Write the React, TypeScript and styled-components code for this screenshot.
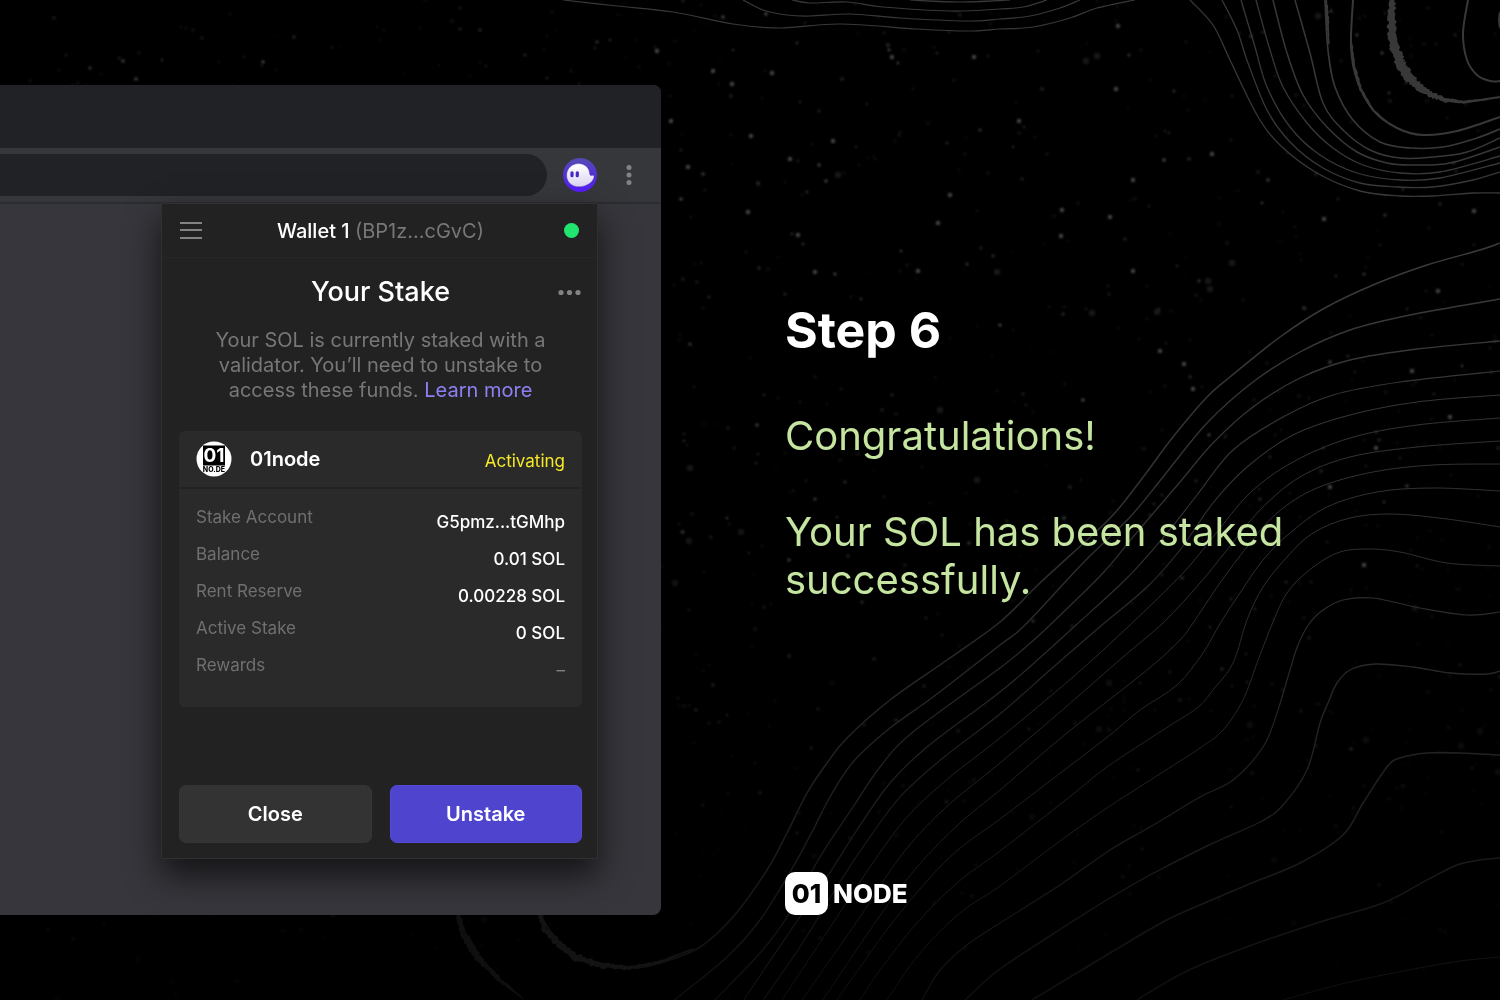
import React from "react";
import styled, { createGlobalStyle } from "styled-components";

const Global = createGlobalStyle`
  *, *::before, *::after { box-sizing: border-box; }
  body {
    margin: 0;
    background: #000;
    color: #fff;
    font-family: Inter, "Liberation Sans", sans-serif;
  }
  h1, h2, p, dl, dt, dd { margin: 0; font-weight: 400; }
  button, input { font: inherit; color: inherit; }
`;

/* ---------- backdrop: star dust and contour lines ---------- */

type Point = [number, number];

const parse = (s: string): Point[] =>
  s.split(" ").map((p) => p.split(",").map(Number) as Point);

const smooth = (pts: Point[]): string => {
  let d = `M${pts[0][0]} ${pts[0][1]}`;
  for (let i = 0; i < pts.length - 1; i++) {
    const a = pts[i - 1] || pts[i];
    const b = pts[i];
    const c = pts[i + 1];
    const e = pts[i + 2] || c;
    const x1 = b[0] + (c[0] - a[0]) / 6;
    const y1 = b[1] + (c[1] - a[1]) / 6;
    const x2 = c[0] - (e[0] - b[0]) / 6;
    const y2 = c[1] - (e[1] - b[1]) / 6;
    d += `C${x1.toFixed(1)} ${y1.toFixed(1)} ${x2.toFixed(1)} ${y2.toFixed(1)} ${c[0]} ${c[1]}`;
  }
  return d;
};

const topLines: [string, number][] = [
  ["1190,0 1213,25 1230,60 1257,115 1280,145 1317,173 1360,191 1400,196 1433,196 1473,193 1500,193", 1.3],
  ["1222,0 1237,30 1248,63 1267,110 1290,142 1323,168 1360,183 1397,187 1433,187 1473,180 1500,172", 1.3],
  ["1241,0 1255,47 1267,87 1290,127 1320,155 1357,173 1400,180 1440,178 1500,163", 1.3],
  ["1256,0 1270,50 1283,87 1307,123 1333,148 1363,165 1400,173 1440,172 1500,156", 1.3],
  ["1273,0 1287,53 1303,95 1327,127 1357,152 1387,163 1413,165 1450,163 1500,147", 1.5],
  ["1295,0 1310,53 1323,103 1343,130 1370,150 1400,158 1433,157 1467,152 1500,138", 1.5],
  ["1325,0 1328,50 1335,87 1353,120 1380,142 1410,148 1443,147 1477,138 1500,129", 1.7],
  ["1353,0 1351,47 1357,80 1373,110 1397,128 1423,135 1457,131 1500,117", 2],
  ["1391,0 1391,33 1398,62 1417,85 1440,98 1463,102 1500,97", 2],
  ["1468,0 1463,33 1467,60 1477,75 1490,81 1500,81", 2],
  ["1500,12 1499,20 1500,28", 2],
  ["563,0 617,6 673,12 733,24 780,28 840,24 917,29 967,31 1000,29 1033,27 1070,18 1097,8 1135,0", 1.2],
  ["743,0 763,10 787,15 810,16 850,14 900,18 967,21 1000,19 1030,16 1060,8 1080,0", 1.2],
  ["792,0 810,3 847,2 883,7 950,11 1000,9 1023,7 1047,0", 1.2],
  ["910,0 960,2 1010,0", 1.2],
];

const lowerLines: [string, number][] = [
  ["1500,243 1480,250 1427,265 1373,285 1323,309 1280,337 1230,377 1207,397 1173,437 1147,472 1120,507 1100,528 1040,583 1000,622 947,660 890,700 847,738 827,763 807,793 787,833 767,870 733,917 700,947 660,963 630,968 590,962 560,943 540,915", 1.5],
  ["1500,299 1410,315 1350,330 1300,352 1253,382 1207,423 1163,477 1130,517 1083,563 1025,625 1000,645 933,697 890,728 853,762 830,797 813,830 793,867 760,920 727,957 677,998 670,1004", 1.4],
  ["1500,341 1417,349 1350,360 1300,378 1253,407 1213,443 1180,482 1133,537 1103,573 1050,625 1028,645 1000,668 913,732 880,767 853,807 820,857 787,917 760,953 717,998 710,1006", 1.3],
  ["1500,371 1400,382 1333,395 1283,417 1233,450 1197,495 1167,533 1127,578 1076,625 1043,655 1000,692 927,747 890,783 857,830 827,877 793,927 745,998 740,1006", 1.2],
  ["1500,395 1417,402 1350,415 1293,435 1247,467 1213,503 1180,550 1147,587 1102,625 1050,670 1000,714 943,758 900,797 863,847 833,893 800,947 763,1000", 1.1],
  ["1500,418 1417,425 1350,438 1293,462 1250,493 1213,537 1183,573 1130,625 1073,677 1000,738 950,777 907,817 870,867 833,923 782,1000", 1],
  ["1500,441 1417,447 1350,457 1300,477 1260,510 1227,550 1200,583 1164,622 1123,657 1067,706 1000,763 943,810 900,857 860,917 802,1000", 1],
  ["1500,464 1433,465 1373,472 1317,488 1277,513 1247,547 1220,583 1193,623 1180,640 1147,670 1067,733 1000,790 960,823 917,867 877,920 823,1000", 1],
  ["1500,491 1433,488 1377,492 1327,507 1290,533 1263,560 1240,593 1221,622 1203,653 1177,685 1140,710 1110,735 1050,781 1000,819 950,857 900,913 858,970 837,1000", 1],
  ["1500,527 1447,519 1393,514 1350,518 1313,533 1287,557 1263,587 1247,620 1233,663 1213,690 1197,708 1163,730 1107,767 1067,799 1000,851 957,883 917,923 880,970 860,1000", 1],
  ["1500,566 1447,563 1400,552 1367,549 1337,553 1307,572 1287,593 1273,622 1257,663 1243,700 1223,730 1200,748 1163,772 1110,806 1060,841 1000,886 960,913 920,953 887,1000", 1],
  ["1500,612 1467,615 1420,608 1373,598 1343,600 1323,610 1309,624 1298,645 1290,670 1277,713 1263,747 1233,780 1200,797 1150,827 1110,850 1060,885 1000,923 967,945 940,970 922,1000", 1.2],
  ["1500,671 1487,674 1450,673 1413,667 1375,664 1350,670 1337,683 1328,703 1320,723 1307,770 1283,805 1260,822 1207,846 1150,875 1110,898 1067,925 1000,969 965,1000", 1.4],
  ["1500,755 1460,753 1427,753 1400,758 1387,767 1363,803 1343,835 1300,863 1247,885 1200,905 1163,922 1110,953 1032,1000", 1.6],
  ["1500,858 1480,860 1457,865 1427,880 1383,903 1317,923 1233,952 1183,973 1137,1000", 1.4],
  ["1500,957 1447,963 1350,982 1283,1000", 1],
];

/* Frayed bands: centre line, widest half-width, fill */
const frayed: [string, number, string][] = [
  ["1392,0 1392,18 1392,33 1395,50 1400,64 1408,76 1418,86 1432,95 1446,100 1463,102 1490,99", 6, "#383838"],
  ["1326,0 1327,12 1328,28 1329,46", 1, "#383838"],
  ["1351,40 1354,66 1361,90 1373,110 1388,123", 1, "#383838"],
  ["540,915 545,930 560,945 575,957 600,965 628,968 660,962 695,948", 4, "#131313"],
  ["458,915 464,935 478,958 500,980 525,1000", 4, "#0f0f0f"],
];

const seeded = (seed: number) => () => {
  seed = (seed * 16807) % 2147483647;
  return seed / 2147483647;
};

const fray = (pts: Point[], width: number, seed: number): string => {
  const rnd = seeded(seed);
  const left: string[] = [];
  const right: string[] = [];
  const n = pts.length - 1;
  pts.slice(0, n).forEach((p, i) => {
    const q = pts[i + 1];
    const len = Math.hypot(q[0] - p[0], q[1] - p[1]);
    const nx = -(q[1] - p[1]) / len;
    const ny = (q[0] - p[0]) / len;
    const steps = Math.ceil(len / 2);
    for (let k = 0; k < steps; k++) {
      const t = k / steps;
      const g = (i + t) / n;
      const w = 0.8 + width * (g < 0.4 ? 0.55 + g : 0.95 * Math.max(0, (1 - g) / 0.6));
      const x = p[0] + (q[0] - p[0]) * t;
      const y = p[1] + (q[1] - p[1]) * t;
      const l = w * (0.5 + rnd() * 0.6);
      const r = w * (0.5 + rnd() * 0.6);
      left.push(`${(x + nx * l).toFixed(1)} ${(y + ny * l).toFixed(1)}`);
      right.unshift(`${(x - nx * r).toFixed(1)} ${(y - ny * r).toFixed(1)}`);
    }
  });
  return `M${left.concat(right).join("L")}Z`;
};

const rnd = seeded(4711);
const dust = Array.from({ length: 1500 }, () => {
  const x = rnd() * 1500;
  const y = rnd() * 1000;
  const big = rnd();
  const glow = rnd();
  const fade = y < 450 ? 1 : 1 - (y - 450) / 620;
  return {
    x: Math.round(x),
    y: Math.round(y),
    r: big > 0.97 ? 3.2 : 0.8 + big * 1.1,
    o: (big > 0.97 ? 0.09 : 0.06 + glow * glow * glow * 0.24) * fade,
  };
});

const brightDust = parse(
  "1133,271 1019,121 1116,89 1133,180 1212,154 1118,26 1062,210 1110,217 1061,236 1324,219 1474,211 1438,291 1376,448 1330,487 1160,351 1184,364 1193,389 671,121 713,71 732,84 751,136 772,73 688,167 833,141 790,159 748,212 657,51 798,235 950,195 938,223 892,57 974,57 918,271 815,272 1412,371 1450,417 1364,565"
);

const BackdropSvg = styled.svg`
  position: absolute;
  inset: 0;
  width: 100%;
  height: 100%;
`;

const Backdrop = () => (
  <BackdropSvg viewBox="0 0 1500 1000" preserveAspectRatio="xMidYMid slice" aria-hidden="true">
    <defs>
      <linearGradient id="lower" gradientUnits="userSpaceOnUse" x1="0" y1="240" x2="0" y2="1000">
        <stop offset="0" stopColor="#3c3c3c" />
        <stop offset="0.5" stopColor="#2b2b2b" />
        <stop offset="0.8" stopColor="#1b1b1b" />
        <stop offset="1" stopColor="#0f0f0f" />
      </linearGradient>
      <filter id="soft" x="0" y="0" width="100%" height="100%">
        <feGaussianBlur stdDeviation="0.8" />
      </filter>
    </defs>
    <g fill="#fff" filter="url(#soft)">
      {dust.map((s, i) => (
        <circle key={i} cx={s.x} cy={s.y} r={s.r} opacity={s.o} />
      ))}
      {brightDust.map(([x, y], i) => (
        <circle key={i} cx={x} cy={y} r={2.2} opacity={0.27} />
      ))}
    </g>
    <g fill="none" stroke="#383838">
      {topLines.map(([p, w], i) => (
        <path key={i} d={smooth(parse(p))} strokeWidth={w} />
      ))}
    </g>
    <g fill="none" stroke="url(#lower)">
      {lowerLines.map(([p, w], i) => (
        <path key={i} d={smooth(parse(p))} strokeWidth={w} />
      ))}
    </g>
    {frayed.map(([p, w, fill], i) => (
      <path key={i} d={fray(parse(p), w, 31 + i)} fill={fill} />
    ))}
  </BackdropSvg>
);

/* ---------- page ---------- */

const Page = styled.main`
  position: relative;
  display: grid;
  grid-template-columns: minmax(0, 661fr) minmax(0, 839fr);
  align-content: center;
  min-height: 100vh;
  overflow: hidden;
`;

const BrowserWindow = styled.section`
  position: relative;
  display: flex;
  flex-direction: column;
  border-radius: 0 8px 8px 0;
  background: #37363c;
  overflow: hidden;
`;

const TabStrip = styled.div`
  height: 63px;
  background: #212225;
`;

const Toolbar = styled.div`
  display: flex;
  align-items: center;
  height: 56px;
  padding-right: 24px;
  background: #36373b;
  border-bottom: 2px solid #2b2c2f;
`;

const AddressBar = styled.input`
  flex: 1;
  min-width: 0;
  height: 42px;
  padding: 0 20px;
  border: 0;
  border-radius: 0 21px 21px 0;
  background: #212225;
  outline: none;
`;

const IconButton = styled.button`
  display: flex;
  align-items: center;
  justify-content: center;
  padding: 0;
  border: 0;
  background: none;
  color: #838383;
  cursor: pointer;
`;

const ExtensionButton = styled(IconButton)`
  margin: 0 24px 0 16px;
`;

const Viewport = styled.div`
  display: flex;
  justify-content: flex-end;
  padding: 0 63px 56px 0;
`;

const Popup = styled.article`
  display: flex;
  flex-direction: column;
  width: 437px;
  min-height: 656px;
  margin-top: -1px;
  padding: 0 15px 15px 17px;
  border: 1px solid #303031;
  background: #222;
  box-shadow: 0 16px 32px rgba(0, 0, 0, 0.65);
  z-index: 1;
`;

const PopupHeader = styled.header`
  display: grid;
  grid-template-columns: 24px 1fr 24px;
  align-items: center;
  height: 54px;
  margin: 0 -15px 0 -17px;
  padding: 0 15px 0 17px;
  border-bottom: 1px solid #272727;
`;

const WalletName = styled.p`
  text-align: center;
  font-size: 20px;
  line-height: 24px;
  font-weight: 500;
`;

const Address = styled.span`
  color: #777;
  font-weight: 400;
`;

const StatusDot = styled.span`
  justify-self: end;
  width: 15px;
  height: 15px;
  margin-right: 3px;
  border-radius: 50%;
  background: #21e56f;
`;

const TitleRow = styled.div`
  display: grid;
  grid-template-columns: 24px 1fr 24px;
  align-items: center;
  margin-top: 17px;
`;

const Title = styled.h2`
  grid-column: 2;
  text-align: center;
  font-size: 27px;
  line-height: 34px;
  font-weight: 500;
`;

const Description = styled.p`
  width: 340px;
  margin: 19px auto 0;
  text-align: center;
  color: #777;
  font-size: 20px;
  line-height: 25px;
`;

const Link = styled.a`
  color: #8c80f2;
  text-decoration: none;
`;

const Card = styled.section`
  margin-top: 28px;
  border-radius: 6px;
  background: #2a2a2a;
`;

const CardHeader = styled.div`
  display: flex;
  align-items: center;
  height: 58px;
  padding: 0 17px;
  border-bottom: 2px solid #232323;
`;

const ValidatorName = styled.span`
  flex: 1;
  margin-left: 18px;
  font-size: 20px;
  line-height: 24px;
  font-weight: 600;
`;

const Status = styled.span`
  padding-top: 3px;
  color: #f5ea25;
  font-size: 17px;
  line-height: 22px;
`;

const Details = styled.dl`
  display: grid;
  gap: 10px;
  padding: 17px 17px 26px;
`;

const DetailRow = styled.div`
  display: flex;
  justify-content: space-between;
  height: 27px;
  font-size: 17px;
  line-height: 22px;
`;

const Label = styled.dt`
  color: #707070;
`;

const Value = styled.dd<{ $muted?: boolean }>`
  align-self: flex-end;
  color: ${(p) => (p.$muted ? "#808080" : "#fff")};
  font-weight: ${(p) => (p.$muted ? 400 : 500)};
`;

const Actions = styled.div`
  display: grid;
  grid-template-columns: 1fr 1fr;
  gap: 18px;
  margin-top: auto;
`;

const ActionButton = styled.button<{ $primary?: boolean }>`
  height: 58px;
  border: 1px solid ${(p) => (p.$primary ? "#5549d8" : "#353535")};
  border-radius: 7px;
  background: ${(p) => (p.$primary ? "#4f44ce" : "#333")};
  font-size: 20px;
  font-weight: 600;
  cursor: pointer;
`;

const Story = styled.section`
  position: relative;
  display: flex;
  flex-direction: column;
  padding: 213px 0 0 124px;
`;

const StepTitle = styled.h1`
  font-size: 50px;
  line-height: 64px;
  font-weight: 700;
`;

const Message = styled.p`
  max-width: 560px;
  margin-top: 50px;
  color: #c5e5a0;
  font-size: 40px;
  line-height: 48px;

  & + & { margin-top: 48px; }
`;

const Brand = styled.div`
  display: flex;
  align-items: center;
  gap: 5px;
  margin-top: auto;
  font-size: 26px;
  line-height: 32px;
  font-weight: 800;
`;

const BrandMark = styled.span`
  display: flex;
  align-items: center;
  justify-content: center;
  width: 43px;
  height: 43px;
  border-radius: 10px;
  background: #fff;
  color: #000;
`;

/* ---------- drawings ---------- */

const GhostIcon = () => (
  <svg width="34" height="34" viewBox="0 0 34 34" aria-hidden="true">
    <defs>
      <linearGradient id="disc" x1="0" y1="0" x2="0" y2="1">
        <stop offset="0" stopColor="#534bb1" />
        <stop offset="1" stopColor="#551bf9" />
      </linearGradient>
      <linearGradient id="body" x1="0" y1="0" x2="0" y2="1">
        <stop offset="0" stopColor="#fff" />
        <stop offset="1" stopColor="#dcd6f3" />
      </linearGradient>
    </defs>
    <circle cx="17" cy="17" r="17" fill="url(#disc)" />
    <path
      d="M15.500 5.600C8.800 5.600 3.600 10.800 3.600 17.400c0 6.700 5.400 11.400 12 11.400 7.600 0 14.200-4.300 15.400-9.400.4-1.700-.7-2.200-1.900-2-1.500.3-2.300-.2-2.400-1.700C26.300 9.800 21.600 5.600 15.500 5.600Z"
      fill="url(#body)"
      stroke="#3c17b4"
      strokeOpacity="0.45"
      strokeWidth="0.8"
    />
    <rect x="7.400" y="13.200" width="3.200" height="6" rx="1.500" fill="#4a2bc0" />
    <rect x="12.700" y="13.200" width="3.200" height="6" rx="1.500" fill="#4a2bc0" />
  </svg>
);

const MenuIcon = () => (
  <svg width="24" height="20" viewBox="0 0 24 20" aria-hidden="true">
    <path d="M1 2h22M1 9h22M1 17h22" stroke="currentColor" strokeWidth="2" />
  </svg>
);

const KebabIcon = () => (
  <svg width="16" height="24" viewBox="0 0 16 24" fill="currentColor" aria-hidden="true">
    <circle cx="8" cy="4.500" r="2.500" />
    <circle cx="8" cy="12" r="2.500" />
    <circle cx="8" cy="19.500" r="2.500" />
  </svg>
);

const MoreIcon = () => (
  <svg width="24" height="16" viewBox="0 0 24 16" fill="currentColor" aria-hidden="true">
    <circle cx="3" cy="8.500" r="2.600" />
    <circle cx="11.500" cy="8.500" r="2.600" />
    <circle cx="20" cy="8.500" r="2.600" />
  </svg>
);

const ValidatorLogo = () => (
  <svg width="36" height="36" viewBox="0 0 36 36" role="img" aria-label="01node logo">
    <circle cx="18" cy="18" r="17.500" fill="#fff" />
    <rect x="7" y="4.500" width="22" height="20" fill="#000" />
    <text x="18" y="21" textAnchor="middle" fontSize="19" fontWeight="700" fill="#fff">01</text>
    <text x="18" y="30.500" textAnchor="middle" fontSize="7" fontWeight="800" fill="#000">NO.DE</text>
  </svg>
);

const details: { label: string; value: string; muted?: boolean }[] = [
  { label: "Stake Account", value: "G5pmz...tGMhp" },
  { label: "Balance", value: "0.01 SOL" },
  { label: "Rent Reserve", value: "0.00228 SOL" },
  { label: "Active Stake", value: "0 SOL" },
  { label: "Rewards", value: "–", muted: true },
];

export default function App() {
  return (
    <Page>
      <Global />
      <Backdrop />
      <BrowserWindow>
        <TabStrip />
        <Toolbar>
          <AddressBar type="text" aria-label="Address" />
          <ExtensionButton type="button" aria-label="Wallet extension">
            <GhostIcon />
          </ExtensionButton>
          <IconButton type="button" aria-label="Browser menu">
            <KebabIcon />
          </IconButton>
        </Toolbar>
        <Viewport>
          <Popup>
            <PopupHeader>
              <IconButton type="button" aria-label="Menu">
                <MenuIcon />
              </IconButton>
              <WalletName>
                Wallet 1 <Address>(BP1z...cGvC)</Address>
              </WalletName>
              <StatusDot />
            </PopupHeader>
            <TitleRow>
              <Title>Your Stake</Title>
              <IconButton type="button" aria-label="More options">
                <MoreIcon />
              </IconButton>
            </TitleRow>
            <Description>
              Your SOL is currently staked with a validator. You’ll need to unstake to access these
              funds. <Link href="#learn-more">Learn more</Link>
            </Description>
            <Card>
              <CardHeader>
                <ValidatorLogo />
                <ValidatorName>01node</ValidatorName>
                <Status>Activating</Status>
              </CardHeader>
              <Details>
                {details.map((d) => (
                  <DetailRow key={d.label}>
                    <Label>{d.label}</Label>
                    <Value $muted={d.muted}>{d.value}</Value>
                  </DetailRow>
                ))}
              </Details>
            </Card>
            <Actions>
              <ActionButton type="button">Close</ActionButton>
              <ActionButton type="button" $primary>
                Unstake
              </ActionButton>
            </Actions>
          </Popup>
        </Viewport>
      </BrowserWindow>
      <Story>
        <StepTitle>Step 6</StepTitle>
        <Message>Congratulations!</Message>
        <Message>Your SOL has been staked successfully.</Message>
        <Brand>
          <BrandMark>01</BrandMark>
          NODE
        </Brand>
      </Story>
    </Page>
  );
}
